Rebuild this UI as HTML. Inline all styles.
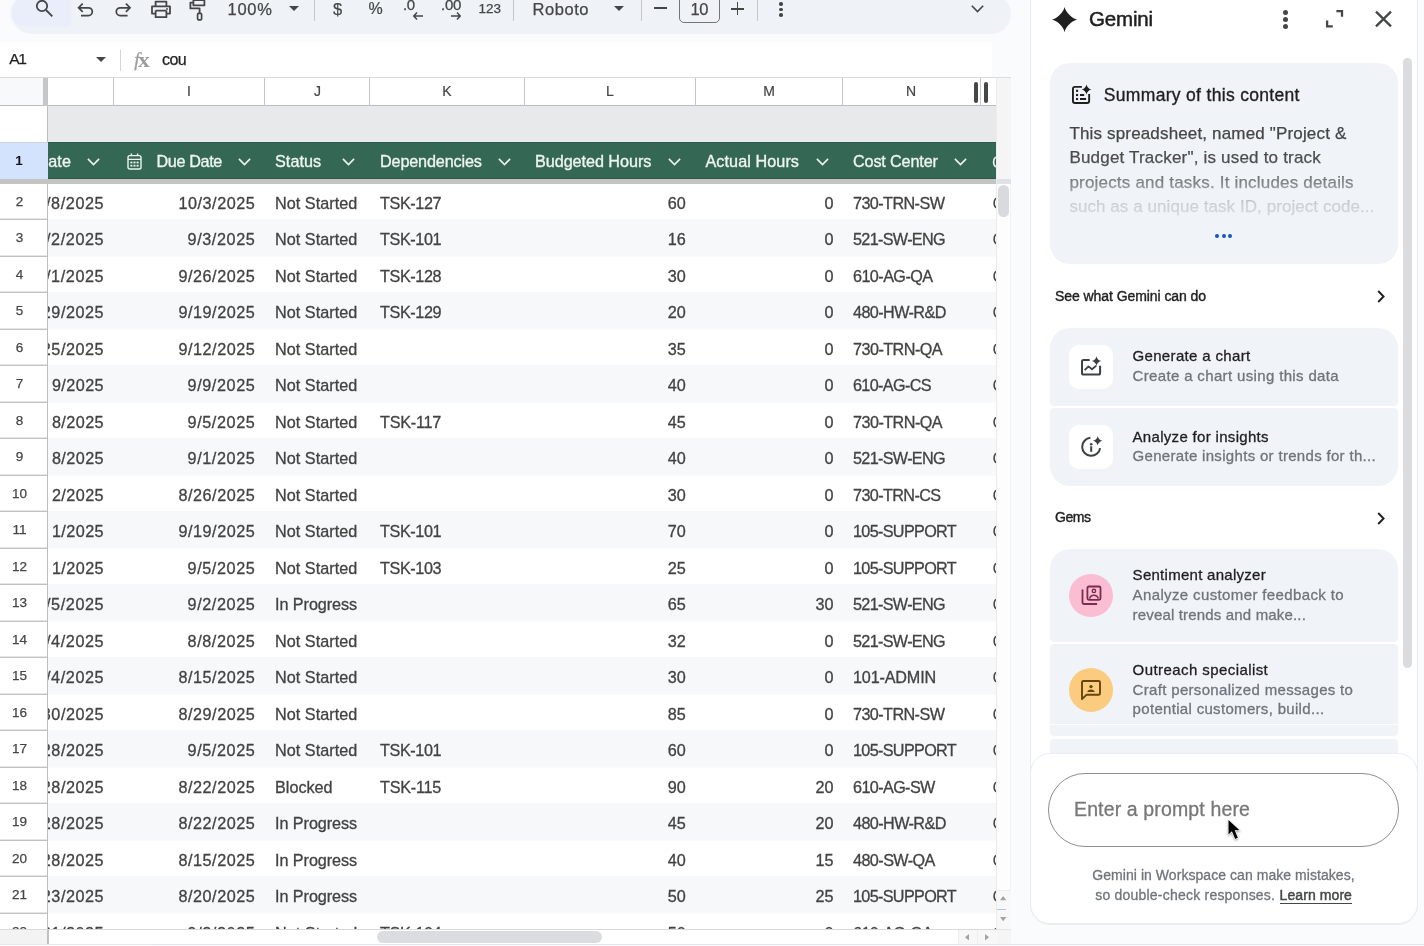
<!DOCTYPE html>
<html><head><meta charset="utf-8"><title>Sheets</title>
<style>
html,body{margin:0;padding:0}
body{width:1424px;height:946px;overflow:hidden;position:relative;background:#f9fbfd;font-family:"Liberation Sans",sans-serif;}
div,svg{box-sizing:border-box}
svg{overflow:visible}
</style></head><body>
<div style="position:absolute;left:0;top:0;width:1424px;height:946px;overflow:hidden;will-change:transform;background:#f9fbfd">
<div style="position:absolute;left:12px;top:-6px;width:998.5px;height:40px;background:#eff3f8;border-radius:24px;"></div>
<div style="position:absolute;left:12px;top:-6px;width:57.5px;height:32px;background:#e9eefa;border-radius:24px 0 0 16px;box-shadow:0 0 3px 1px #e9eefa;"></div>
<svg style="position:absolute;left:34px;top:-1.8px;" width="20" height="20" viewBox="0 0 20 20"><circle cx="8" cy="8" r="5.2" fill="none" stroke="#444746" stroke-width="1.8"/><path d="M12 12 L18.3 18.3" stroke="#444746" stroke-width="1.9" stroke-linecap="butt"/></svg>
<svg style="position:absolute;left:76px;top:1px;" width="18" height="18" viewBox="0 0 18 18"><path d="M6.7 2.7 L2.6 6.75 L6.7 10.8 M3 6.75 H12.4 A3.9 3.9 0 0 1 12.4 14.55 H5" fill="none" stroke="#444746" stroke-width="1.75"/></svg>
<svg style="position:absolute;left:114px;top:1px;" width="18" height="18" viewBox="0 0 18 18"><path d="M11.9 2.7 L16 6.75 L11.9 10.8 M15.6 6.75 H6.2 A3.9 3.9 0 0 0 6.2 14.55 H13.6" fill="none" stroke="#444746" stroke-width="1.75"/></svg>
<svg style="position:absolute;left:151px;top:0px;" width="20" height="19" viewBox="0 0 20 19"><path d="M4.6 6.4 V1.6 H15.4 V6.4 M4.6 10.6 V17.2 H15.4 V10.6 M4.6 13.6 H1 V6.4 H19 V13.6 H15.4 M4.6 10.6 H15.4" fill="none" stroke="#444746" stroke-width="1.8" stroke-linejoin="round"/><circle cx="16" cy="9" r="0.9" fill="#444746"/></svg>
<svg style="position:absolute;left:189px;top:-2px;" width="18" height="24" viewBox="0 0 18 24"><path d="M4.4 2 H15.4 V7.4 H4.4 Z M4.4 4.6 H1.4 V10.4 H10.6 V15" fill="none" stroke="#444746" stroke-width="1.8" stroke-linejoin="round"/><rect x="8.6" y="15.4" width="4" height="6.4" rx="1" fill="none" stroke="#444746" stroke-width="1.7"/></svg>
<div style="position:absolute;top:-3.00px;height:25px;line-height:25px;font-size:16.5px;color:#444746;white-space:nowrap;letter-spacing:0.700px;-webkit-text-stroke:0.25px #444746;left:227.50px;">100%</div>
<svg style="position:absolute;left:289px;top:6px;" width="10" height="5" viewBox="0 0 10 5"><path d="M0 0 H10 L5 5 Z" fill="#444746"/></svg>
<div style="position:absolute;left:314px;top:0px;width:1px;height:21px;background:#c7c7c7;"></div>
<div style="position:absolute;top:-3.50px;height:25px;line-height:25px;font-size:16.5px;color:#444746;white-space:nowrap;letter-spacing:-0.677px;-webkit-text-stroke:0.2px #444746;left:333.00px;">$</div>
<div style="position:absolute;top:-3.20px;height:24px;line-height:24px;font-size:16px;color:#444746;white-space:nowrap;letter-spacing:-1.426px;-webkit-text-stroke:0.2px #444746;left:368.50px;">%</div>
<div style="position:absolute;top:-6.40px;height:22px;line-height:22px;font-size:15px;color:#444746;white-space:nowrap;letter-spacing:-0.355px;-webkit-text-stroke:0.3px #444746;left:403.00px;">.0</div>
<svg style="position:absolute;left:413px;top:12px;" width="10" height="8" viewBox="0 0 10 8"><path d="M4 0.6 L0.8 4 L4 7.4 M1 4 H10" fill="none" stroke="#444746" stroke-width="1.5"/></svg>
<div style="position:absolute;top:-6.40px;height:22px;line-height:22px;font-size:15px;color:#444746;white-space:nowrap;letter-spacing:-0.284px;-webkit-text-stroke:0.3px #444746;left:441.00px;">.00</div>
<svg style="position:absolute;left:450.5px;top:12px;" width="10" height="8" viewBox="0 0 10 8"><path d="M6 0.6 L9.2 4 L6 7.4 M9 4 H0" fill="none" stroke="#444746" stroke-width="1.5"/></svg>
<div style="position:absolute;top:-1.50px;height:20px;line-height:20px;font-size:13.5px;color:#444746;white-space:nowrap;letter-spacing:-0.008px;-webkit-text-stroke:0.25px #444746;left:478.50px;">123</div>
<div style="position:absolute;left:513px;top:0px;width:1px;height:21px;background:#c7c7c7;"></div>
<div style="position:absolute;top:-3.50px;height:25px;line-height:25px;font-size:16.5px;color:#444746;white-space:nowrap;letter-spacing:0.549px;-webkit-text-stroke:0.25px #444746;left:532.50px;">Roboto</div>
<svg style="position:absolute;left:613.5px;top:5.5px;" width="10" height="5" viewBox="0 0 10 5"><path d="M0 0 H10 L5 5 Z" fill="#444746"/></svg>
<div style="position:absolute;left:641px;top:0px;width:1px;height:21px;background:#c7c7c7;"></div>
<div style="position:absolute;left:653.5px;top:7.2px;width:13px;height:1.7px;background:#444746;"></div>
<div style="position:absolute;left:679px;top:-8px;width:40.5px;height:31px;background:transparent;border:1px solid #747775;border-radius:5px;"></div>
<div style="position:absolute;top:-3.50px;height:25px;line-height:25px;font-size:16.5px;color:#444746;white-space:nowrap;letter-spacing:-0.427px;-webkit-text-stroke:0.25px #444746;left:690.50px;">10</div>
<div style="position:absolute;left:731px;top:7.9px;width:12.6px;height:1.7px;background:#444746;"></div>
<div style="position:absolute;left:736.5px;top:2.4px;width:1.7px;height:12.6px;background:#444746;"></div>
<div style="position:absolute;left:757px;top:0px;width:1px;height:21px;background:#c7c7c7;"></div>
<div style="position:absolute;left:779.4px;top:2.0999999999999996px;width:3.5px;height:3.5px;background:#444746;border-radius:50%;"></div>
<div style="position:absolute;left:779.4px;top:7.499999999999999px;width:3.5px;height:3.5px;background:#444746;border-radius:50%;"></div>
<div style="position:absolute;left:779.4px;top:13.100000000000001px;width:3.5px;height:3.5px;background:#444746;border-radius:50%;"></div>
<svg style="position:absolute;left:970.5px;top:5px;" width="13" height="8" viewBox="0 0 13 8"><path d="M0.8 0.8 L6.5 6.6 L12.2 0.8" fill="none" stroke="#444746" stroke-width="1.6"/></svg>
<div style="position:absolute;left:0px;top:42px;width:991.5px;height:35.5px;background:#ffffff;"></div>
<div style="position:absolute;top:47.40px;height:23px;line-height:23px;font-size:15.5px;color:#1f1f1f;white-space:nowrap;letter-spacing:-1.380px;-webkit-text-stroke:0.25px #1f1f1f;left:9.30px;">A1</div>
<svg style="position:absolute;left:96px;top:57px;" width="10" height="5" viewBox="0 0 10 5"><path d="M0 0 H10 L5 5 Z" fill="#444746"/></svg>
<div style="position:absolute;left:120px;top:50px;width:1px;height:21px;background:#d5d5d5;"></div>
<div style="position:absolute;left:134.3px;top:47px;width:24px;height:24px;line-height:24px;font-family:'Liberation Serif',serif;color:#9e9e9e;white-space:nowrap"><span style="font-style:italic;font-size:19px;-webkit-text-stroke:0.35px #9e9e9e">f</span><span style="display:inline-block;font-weight:bold;font-size:21px;margin-left:-1.6px;position:relative;top:1.2px;transform:scaleX(1.12);transform-origin:left center">x</span></div>
<div style="position:absolute;top:48.40px;height:24px;line-height:24px;font-size:16px;color:#1f1f1f;white-space:nowrap;letter-spacing:-0.533px;-webkit-text-stroke:0.25px #1f1f1f;left:162.00px;">cou</div>
<div style="position:absolute;left:0px;top:77px;width:996px;height:29px;background:#ffffff;border-top:1px solid #d9d9d9;border-bottom:1.5px solid #bdbdbd;"></div>
<div style="position:absolute;left:0px;top:78px;width:43.5px;height:27px;background:#f8f9fa;"></div>
<div style="position:absolute;left:43px;top:77.5px;width:4.5px;height:28px;background:#c4c7c5;"></div>
<div style="position:absolute;left:113px;top:78px;width:1px;height:27.5px;background:#c6c6c6;"></div>
<div style="position:absolute;left:264px;top:78px;width:1px;height:27.5px;background:#c6c6c6;"></div>
<div style="position:absolute;left:369px;top:78px;width:1px;height:27.5px;background:#c6c6c6;"></div>
<div style="position:absolute;left:524px;top:78px;width:1px;height:27.5px;background:#c6c6c6;"></div>
<div style="position:absolute;left:694.5px;top:78px;width:1px;height:27.5px;background:#c6c6c6;"></div>
<div style="position:absolute;left:842px;top:78px;width:1px;height:27.5px;background:#c6c6c6;"></div>
<div style="position:absolute;left:980px;top:78px;width:1px;height:27.5px;background:#c6c6c6;"></div>
<div style="position:absolute;top:81.10px;height:21px;line-height:21px;font-size:14px;color:#444746;white-space:nowrap;-webkit-text-stroke:0.2px #444746;left:179.00px;width:20px;text-align:center;">I</div>
<div style="position:absolute;top:81.10px;height:21px;line-height:21px;font-size:14px;color:#444746;white-space:nowrap;-webkit-text-stroke:0.2px #444746;left:307.50px;width:20px;text-align:center;">J</div>
<div style="position:absolute;top:81.10px;height:21px;line-height:21px;font-size:14px;color:#444746;white-space:nowrap;-webkit-text-stroke:0.2px #444746;left:437.00px;width:20px;text-align:center;">K</div>
<div style="position:absolute;top:81.10px;height:21px;line-height:21px;font-size:14px;color:#444746;white-space:nowrap;-webkit-text-stroke:0.2px #444746;left:600.00px;width:20px;text-align:center;">L</div>
<div style="position:absolute;top:81.10px;height:21px;line-height:21px;font-size:14px;color:#444746;white-space:nowrap;-webkit-text-stroke:0.2px #444746;left:759.00px;width:20px;text-align:center;">M</div>
<div style="position:absolute;top:81.10px;height:21px;line-height:21px;font-size:14px;color:#444746;white-space:nowrap;-webkit-text-stroke:0.2px #444746;left:901.00px;width:20px;text-align:center;">N</div>
<div style="position:absolute;left:974px;top:82px;width:4.2px;height:20.5px;background:#444746;border-radius:2px;"></div>
<div style="position:absolute;left:983.8px;top:82px;width:4px;height:20.5px;background:#444746;border-radius:2px;"></div>
<div style="position:absolute;left:48px;top:106px;width:948px;height:36.5px;background:#e8e9eb;"></div>
<div style="position:absolute;left:0px;top:106px;width:47px;height:36.5px;background:#ffffff;"></div>
<div style="position:absolute;left:47px;top:106px;width:1px;height:838px;background:#bdbdbd;"></div>
<div style="position:absolute;left:0px;top:142px;width:47.5px;height:37px;background:#d3e3fd;border-top:1px solid #d0d4da;"></div>
<div style="position:absolute;top:150.50px;height:20px;line-height:20px;font-size:13.5px;color:#111;white-space:nowrap;font-weight:bold;left:9.00px;width:20px;text-align:center;">1</div>
<div style="position:absolute;left:47.5px;top:142px;width:948.5px;height:37px;background:#356854;border-top:1px solid #2d5a48;border-bottom:1px solid #2d5a48;"></div>
<div style="position:absolute;top:148.80px;height:24px;line-height:24px;font-size:16.2px;color:#eef4f0;white-space:nowrap;letter-spacing:0.055px;-webkit-text-stroke:0.35px #eef4f0;left:48.30px;">ate</div>
<svg style="position:absolute;left:87.0px;top:158px;" width="13" height="8" viewBox="0 0 13 8"><path d="M0.9 0.9 L6.5 6.5 L12.1 0.9" fill="none" stroke="#eef4f0" stroke-width="1.6"/></svg>
<svg style="position:absolute;left:126.5px;top:152.5px;" width="15" height="17" viewBox="0 0 15 17"><rect x="1" y="2.6" width="13" height="13.4" rx="1.8" fill="none" stroke="#eef4f0" stroke-width="1.4"/><path d="M4.4 0.4 V3 M10.6 0.4 V3 M1 6.4 H14" stroke="#eef4f0" stroke-width="1.4" fill="none"/><g fill="#eef4f0"><rect x="3.4" y="8.6" width="2" height="1.8"/><rect x="6.5" y="8.6" width="2" height="1.8"/><rect x="9.6" y="8.6" width="2" height="1.8"/><rect x="3.4" y="11.8" width="2" height="1.8"/><rect x="6.5" y="11.8" width="2" height="1.8"/><rect x="9.6" y="11.8" width="2" height="1.8"/></g></svg>
<div style="position:absolute;top:148.80px;height:24px;line-height:24px;font-size:16.2px;color:#eef4f0;white-space:nowrap;letter-spacing:-0.373px;-webkit-text-stroke:0.35px #eef4f0;left:156.50px;">Due Date</div>
<svg style="position:absolute;left:238.0px;top:158px;" width="13" height="8" viewBox="0 0 13 8"><path d="M0.9 0.9 L6.5 6.5 L12.1 0.9" fill="none" stroke="#eef4f0" stroke-width="1.6"/></svg>
<div style="position:absolute;top:148.80px;height:24px;line-height:24px;font-size:16.2px;color:#eef4f0;white-space:nowrap;letter-spacing:0.061px;-webkit-text-stroke:0.35px #eef4f0;left:275.00px;">Status</div>
<svg style="position:absolute;left:342.0px;top:158px;" width="13" height="8" viewBox="0 0 13 8"><path d="M0.9 0.9 L6.5 6.5 L12.1 0.9" fill="none" stroke="#eef4f0" stroke-width="1.6"/></svg>
<div style="position:absolute;top:148.80px;height:24px;line-height:24px;font-size:16.2px;color:#eef4f0;white-space:nowrap;letter-spacing:-0.147px;-webkit-text-stroke:0.35px #eef4f0;left:380.00px;">Dependencies</div>
<svg style="position:absolute;left:498.0px;top:158px;" width="13" height="8" viewBox="0 0 13 8"><path d="M0.9 0.9 L6.5 6.5 L12.1 0.9" fill="none" stroke="#eef4f0" stroke-width="1.6"/></svg>
<div style="position:absolute;top:148.80px;height:24px;line-height:24px;font-size:16.2px;color:#eef4f0;white-space:nowrap;letter-spacing:-0.049px;-webkit-text-stroke:0.35px #eef4f0;left:535.00px;">Budgeted Hours</div>
<svg style="position:absolute;left:668.0px;top:158px;" width="13" height="8" viewBox="0 0 13 8"><path d="M0.9 0.9 L6.5 6.5 L12.1 0.9" fill="none" stroke="#eef4f0" stroke-width="1.6"/></svg>
<div style="position:absolute;top:148.80px;height:24px;line-height:24px;font-size:16.2px;color:#eef4f0;white-space:nowrap;letter-spacing:0.070px;-webkit-text-stroke:0.35px #eef4f0;left:705.50px;">Actual Hours</div>
<svg style="position:absolute;left:816.0px;top:158px;" width="13" height="8" viewBox="0 0 13 8"><path d="M0.9 0.9 L6.5 6.5 L12.1 0.9" fill="none" stroke="#eef4f0" stroke-width="1.6"/></svg>
<div style="position:absolute;top:148.80px;height:24px;line-height:24px;font-size:16.2px;color:#eef4f0;white-space:nowrap;letter-spacing:-0.143px;-webkit-text-stroke:0.35px #eef4f0;left:853.00px;">Cost Center</div>
<svg style="position:absolute;left:954.0px;top:158px;" width="13" height="8" viewBox="0 0 13 8"><path d="M0.9 0.9 L6.5 6.5 L12.1 0.9" fill="none" stroke="#eef4f0" stroke-width="1.6"/></svg>
<div style="position:absolute;left:990px;top:142px;width:6px;height:37px;overflow:hidden"><div style="position:absolute;left:2px;top:7.5px;height:24px;line-height:24px;font-size:16.2px;color:#eef4f0">C</div></div>
<div style="position:absolute;left:0px;top:179px;width:996px;height:4.7px;background:#c4c4c4;"></div>
<div style="position:absolute;left:0;top:183.5px;width:996px;height:745.5px;overflow:hidden">
<div style="position:absolute;left:48px;top:0.00px;width:948px;height:36.50px;background:#ffffff"></div>
<div style="position:absolute;left:0;top:0.00px;width:47px;height:36.50px;background:#fff;border-bottom:1px solid #c2c2c2;box-shadow:inset 0 -1px 0 #e6e6e6"></div>
<div style="position:absolute;left:0.6px;top:8.45px;width:38px;height:20px;line-height:20px;text-align:center;font-size:13.5px;color:#444746;-webkit-text-stroke:0.25px #444746">2</div>
<div style="position:absolute;left:48px;top:0.00px;width:66px;height:36.50px;overflow:hidden">
<div style="position:absolute;right:9.79px;top:7.25px;height:24px;line-height:24px;font-size:16.2px;color:#434343;white-space:nowrap;letter-spacing:0.609px;-webkit-text-stroke:0.3px #434343">9/8/2025</div></div>
<div style="position:absolute;top:7.25px;height:24px;line-height:24px;font-size:16.2px;color:#434343;white-space:nowrap;letter-spacing:0.551px;-webkit-text-stroke:0.3px #434343;right:740.65px;">10/3/2025</div>
<div style="position:absolute;top:7.25px;height:24px;line-height:24px;font-size:16.2px;color:#434343;white-space:nowrap;letter-spacing:0.032px;-webkit-text-stroke:0.3px #434343;left:275px;">Not Started</div>
<div style="position:absolute;top:7.25px;height:24px;line-height:24px;font-size:16.2px;color:#434343;white-space:nowrap;letter-spacing:-0.391px;-webkit-text-stroke:0.3px #434343;left:380px;">TSK-127</div>
<div style="position:absolute;top:7.25px;height:24px;line-height:24px;font-size:16.2px;color:#434343;white-space:nowrap;letter-spacing:0.087px;-webkit-text-stroke:0.3px #434343;right:310.11px;">60</div>
<div style="position:absolute;top:7.25px;height:24px;line-height:24px;font-size:16.2px;color:#434343;white-space:nowrap;letter-spacing:0.087px;-webkit-text-stroke:0.3px #434343;right:162.41px;">0</div>
<div style="position:absolute;top:7.25px;height:24px;line-height:24px;font-size:16.2px;color:#434343;white-space:nowrap;letter-spacing:-0.581px;-webkit-text-stroke:0.3px #434343;left:853px;">730-TRN-SW</div>
<div style="position:absolute;left:990px;top:0.00px;width:6px;height:36.50px;overflow:hidden"><div style="position:absolute;left:2.5px;top:7.25px;height:24px;line-height:24px;font-size:16.2px;color:#434343">C</div></div>
<div style="position:absolute;left:48px;top:35.20px;width:948px;height:37.80px;background:#f6f8f9"></div>
<div style="position:absolute;left:0;top:36.50px;width:47px;height:36.50px;background:#fff;border-bottom:1px solid #c2c2c2;box-shadow:inset 0 -1px 0 #e6e6e6"></div>
<div style="position:absolute;left:0.6px;top:44.95px;width:38px;height:20px;line-height:20px;text-align:center;font-size:13.5px;color:#444746;-webkit-text-stroke:0.25px #444746">3</div>
<div style="position:absolute;left:48px;top:36.50px;width:66px;height:36.50px;overflow:hidden">
<div style="position:absolute;right:9.79px;top:7.25px;height:24px;line-height:24px;font-size:16.2px;color:#434343;white-space:nowrap;letter-spacing:0.609px;-webkit-text-stroke:0.3px #434343">9/2/2025</div></div>
<div style="position:absolute;top:43.75px;height:24px;line-height:24px;font-size:16.2px;color:#434343;white-space:nowrap;letter-spacing:0.609px;-webkit-text-stroke:0.3px #434343;right:740.59px;">9/3/2025</div>
<div style="position:absolute;top:43.75px;height:24px;line-height:24px;font-size:16.2px;color:#434343;white-space:nowrap;letter-spacing:0.032px;-webkit-text-stroke:0.3px #434343;left:275px;">Not Started</div>
<div style="position:absolute;top:43.75px;height:24px;line-height:24px;font-size:16.2px;color:#434343;white-space:nowrap;letter-spacing:-0.391px;-webkit-text-stroke:0.3px #434343;left:380px;">TSK-101</div>
<div style="position:absolute;top:43.75px;height:24px;line-height:24px;font-size:16.2px;color:#434343;white-space:nowrap;letter-spacing:0.087px;-webkit-text-stroke:0.3px #434343;right:310.11px;">16</div>
<div style="position:absolute;top:43.75px;height:24px;line-height:24px;font-size:16.2px;color:#434343;white-space:nowrap;letter-spacing:0.087px;-webkit-text-stroke:0.3px #434343;right:162.41px;">0</div>
<div style="position:absolute;top:43.75px;height:24px;line-height:24px;font-size:16.2px;color:#434343;white-space:nowrap;letter-spacing:-0.673px;-webkit-text-stroke:0.3px #434343;left:853px;">521-SW-ENG</div>
<div style="position:absolute;left:990px;top:36.50px;width:6px;height:36.50px;overflow:hidden"><div style="position:absolute;left:2.5px;top:7.25px;height:24px;line-height:24px;font-size:16.2px;color:#434343">C</div></div>
<div style="position:absolute;left:48px;top:73.00px;width:948px;height:36.50px;background:#ffffff"></div>
<div style="position:absolute;left:0;top:73.00px;width:47px;height:36.50px;background:#fff;border-bottom:1px solid #c2c2c2;box-shadow:inset 0 -1px 0 #e6e6e6"></div>
<div style="position:absolute;left:0.6px;top:81.45px;width:38px;height:20px;line-height:20px;text-align:center;font-size:13.5px;color:#444746;-webkit-text-stroke:0.25px #444746">4</div>
<div style="position:absolute;left:48px;top:73.00px;width:66px;height:36.50px;overflow:hidden">
<div style="position:absolute;right:9.79px;top:7.25px;height:24px;line-height:24px;font-size:16.2px;color:#434343;white-space:nowrap;letter-spacing:0.609px;-webkit-text-stroke:0.3px #434343">9/1/2025</div></div>
<div style="position:absolute;top:80.25px;height:24px;line-height:24px;font-size:16.2px;color:#434343;white-space:nowrap;letter-spacing:0.551px;-webkit-text-stroke:0.3px #434343;right:740.65px;">9/26/2025</div>
<div style="position:absolute;top:80.25px;height:24px;line-height:24px;font-size:16.2px;color:#434343;white-space:nowrap;letter-spacing:0.032px;-webkit-text-stroke:0.3px #434343;left:275px;">Not Started</div>
<div style="position:absolute;top:80.25px;height:24px;line-height:24px;font-size:16.2px;color:#434343;white-space:nowrap;letter-spacing:-0.391px;-webkit-text-stroke:0.3px #434343;left:380px;">TSK-128</div>
<div style="position:absolute;top:80.25px;height:24px;line-height:24px;font-size:16.2px;color:#434343;white-space:nowrap;letter-spacing:0.087px;-webkit-text-stroke:0.3px #434343;right:310.11px;">30</div>
<div style="position:absolute;top:80.25px;height:24px;line-height:24px;font-size:16.2px;color:#434343;white-space:nowrap;letter-spacing:0.087px;-webkit-text-stroke:0.3px #434343;right:162.41px;">0</div>
<div style="position:absolute;top:80.25px;height:24px;line-height:24px;font-size:16.2px;color:#434343;white-space:nowrap;letter-spacing:-0.566px;-webkit-text-stroke:0.3px #434343;left:853px;">610-AG-QA</div>
<div style="position:absolute;left:990px;top:73.00px;width:6px;height:36.50px;overflow:hidden"><div style="position:absolute;left:2.5px;top:7.25px;height:24px;line-height:24px;font-size:16.2px;color:#434343">C</div></div>
<div style="position:absolute;left:48px;top:108.20px;width:948px;height:37.80px;background:#f6f8f9"></div>
<div style="position:absolute;left:0;top:109.50px;width:47px;height:36.50px;background:#fff;border-bottom:1px solid #c2c2c2;box-shadow:inset 0 -1px 0 #e6e6e6"></div>
<div style="position:absolute;left:0.6px;top:117.95px;width:38px;height:20px;line-height:20px;text-align:center;font-size:13.5px;color:#444746;-webkit-text-stroke:0.25px #444746">5</div>
<div style="position:absolute;left:48px;top:109.50px;width:66px;height:36.50px;overflow:hidden">
<div style="position:absolute;right:9.85px;top:7.25px;height:24px;line-height:24px;font-size:16.2px;color:#434343;white-space:nowrap;letter-spacing:0.551px;-webkit-text-stroke:0.3px #434343">8/29/2025</div></div>
<div style="position:absolute;top:116.75px;height:24px;line-height:24px;font-size:16.2px;color:#434343;white-space:nowrap;letter-spacing:0.551px;-webkit-text-stroke:0.3px #434343;right:740.65px;">9/19/2025</div>
<div style="position:absolute;top:116.75px;height:24px;line-height:24px;font-size:16.2px;color:#434343;white-space:nowrap;letter-spacing:0.032px;-webkit-text-stroke:0.3px #434343;left:275px;">Not Started</div>
<div style="position:absolute;top:116.75px;height:24px;line-height:24px;font-size:16.2px;color:#434343;white-space:nowrap;letter-spacing:-0.391px;-webkit-text-stroke:0.3px #434343;left:380px;">TSK-129</div>
<div style="position:absolute;top:116.75px;height:24px;line-height:24px;font-size:16.2px;color:#434343;white-space:nowrap;letter-spacing:0.087px;-webkit-text-stroke:0.3px #434343;right:310.11px;">20</div>
<div style="position:absolute;top:116.75px;height:24px;line-height:24px;font-size:16.2px;color:#434343;white-space:nowrap;letter-spacing:0.087px;-webkit-text-stroke:0.3px #434343;right:162.41px;">0</div>
<div style="position:absolute;top:116.75px;height:24px;line-height:24px;font-size:16.2px;color:#434343;white-space:nowrap;letter-spacing:-0.591px;-webkit-text-stroke:0.3px #434343;left:853px;">480-HW-R&amp;D</div>
<div style="position:absolute;left:990px;top:109.50px;width:6px;height:36.50px;overflow:hidden"><div style="position:absolute;left:2.5px;top:7.25px;height:24px;line-height:24px;font-size:16.2px;color:#434343">C</div></div>
<div style="position:absolute;left:48px;top:146.00px;width:948px;height:36.50px;background:#ffffff"></div>
<div style="position:absolute;left:0;top:146.00px;width:47px;height:36.50px;background:#fff;border-bottom:1px solid #c2c2c2;box-shadow:inset 0 -1px 0 #e6e6e6"></div>
<div style="position:absolute;left:0.6px;top:154.45px;width:38px;height:20px;line-height:20px;text-align:center;font-size:13.5px;color:#444746;-webkit-text-stroke:0.25px #444746">6</div>
<div style="position:absolute;left:48px;top:146.00px;width:66px;height:36.50px;overflow:hidden">
<div style="position:absolute;right:9.85px;top:7.25px;height:24px;line-height:24px;font-size:16.2px;color:#434343;white-space:nowrap;letter-spacing:0.551px;-webkit-text-stroke:0.3px #434343">8/25/2025</div></div>
<div style="position:absolute;top:153.25px;height:24px;line-height:24px;font-size:16.2px;color:#434343;white-space:nowrap;letter-spacing:0.551px;-webkit-text-stroke:0.3px #434343;right:740.65px;">9/12/2025</div>
<div style="position:absolute;top:153.25px;height:24px;line-height:24px;font-size:16.2px;color:#434343;white-space:nowrap;letter-spacing:0.032px;-webkit-text-stroke:0.3px #434343;left:275px;">Not Started</div>
<div style="position:absolute;top:153.25px;height:24px;line-height:24px;font-size:16.2px;color:#434343;white-space:nowrap;letter-spacing:0.087px;-webkit-text-stroke:0.3px #434343;right:310.11px;">35</div>
<div style="position:absolute;top:153.25px;height:24px;line-height:24px;font-size:16.2px;color:#434343;white-space:nowrap;letter-spacing:0.087px;-webkit-text-stroke:0.3px #434343;right:162.41px;">0</div>
<div style="position:absolute;top:153.25px;height:24px;line-height:24px;font-size:16.2px;color:#434343;white-space:nowrap;letter-spacing:-0.540px;-webkit-text-stroke:0.3px #434343;left:853px;">730-TRN-QA</div>
<div style="position:absolute;left:990px;top:146.00px;width:6px;height:36.50px;overflow:hidden"><div style="position:absolute;left:2.5px;top:7.25px;height:24px;line-height:24px;font-size:16.2px;color:#434343">C</div></div>
<div style="position:absolute;left:48px;top:181.20px;width:948px;height:37.80px;background:#f6f8f9"></div>
<div style="position:absolute;left:0;top:182.50px;width:47px;height:36.50px;background:#fff;border-bottom:1px solid #c2c2c2;box-shadow:inset 0 -1px 0 #e6e6e6"></div>
<div style="position:absolute;left:0.6px;top:190.95px;width:38px;height:20px;line-height:20px;text-align:center;font-size:13.5px;color:#444746;-webkit-text-stroke:0.25px #444746">7</div>
<div style="position:absolute;left:48px;top:182.50px;width:66px;height:36.50px;overflow:hidden">
<div style="position:absolute;right:9.97px;top:7.25px;height:24px;line-height:24px;font-size:16.2px;color:#434343;white-space:nowrap;letter-spacing:0.435px;-webkit-text-stroke:0.3px #434343">9/2025</div></div>
<div style="position:absolute;top:189.75px;height:24px;line-height:24px;font-size:16.2px;color:#434343;white-space:nowrap;letter-spacing:0.609px;-webkit-text-stroke:0.3px #434343;right:740.59px;">9/9/2025</div>
<div style="position:absolute;top:189.75px;height:24px;line-height:24px;font-size:16.2px;color:#434343;white-space:nowrap;letter-spacing:0.032px;-webkit-text-stroke:0.3px #434343;left:275px;">Not Started</div>
<div style="position:absolute;top:189.75px;height:24px;line-height:24px;font-size:16.2px;color:#434343;white-space:nowrap;letter-spacing:0.087px;-webkit-text-stroke:0.3px #434343;right:310.11px;">40</div>
<div style="position:absolute;top:189.75px;height:24px;line-height:24px;font-size:16.2px;color:#434343;white-space:nowrap;letter-spacing:0.087px;-webkit-text-stroke:0.3px #434343;right:162.41px;">0</div>
<div style="position:absolute;top:189.75px;height:24px;line-height:24px;font-size:16.2px;color:#434343;white-space:nowrap;letter-spacing:-0.638px;-webkit-text-stroke:0.3px #434343;left:853px;">610-AG-CS</div>
<div style="position:absolute;left:990px;top:182.50px;width:6px;height:36.50px;overflow:hidden"><div style="position:absolute;left:2.5px;top:7.25px;height:24px;line-height:24px;font-size:16.2px;color:#434343">C</div></div>
<div style="position:absolute;left:48px;top:219.00px;width:948px;height:36.50px;background:#ffffff"></div>
<div style="position:absolute;left:0;top:219.00px;width:47px;height:36.50px;background:#fff;border-bottom:1px solid #c2c2c2;box-shadow:inset 0 -1px 0 #e6e6e6"></div>
<div style="position:absolute;left:0.6px;top:227.45px;width:38px;height:20px;line-height:20px;text-align:center;font-size:13.5px;color:#444746;-webkit-text-stroke:0.25px #444746">8</div>
<div style="position:absolute;left:48px;top:219.00px;width:66px;height:36.50px;overflow:hidden">
<div style="position:absolute;right:9.97px;top:7.25px;height:24px;line-height:24px;font-size:16.2px;color:#434343;white-space:nowrap;letter-spacing:0.435px;-webkit-text-stroke:0.3px #434343">8/2025</div></div>
<div style="position:absolute;top:226.25px;height:24px;line-height:24px;font-size:16.2px;color:#434343;white-space:nowrap;letter-spacing:0.609px;-webkit-text-stroke:0.3px #434343;right:740.59px;">9/5/2025</div>
<div style="position:absolute;top:226.25px;height:24px;line-height:24px;font-size:16.2px;color:#434343;white-space:nowrap;letter-spacing:0.032px;-webkit-text-stroke:0.3px #434343;left:275px;">Not Started</div>
<div style="position:absolute;top:226.25px;height:24px;line-height:24px;font-size:16.2px;color:#434343;white-space:nowrap;letter-spacing:-0.220px;-webkit-text-stroke:0.3px #434343;left:380px;">TSK-117</div>
<div style="position:absolute;top:226.25px;height:24px;line-height:24px;font-size:16.2px;color:#434343;white-space:nowrap;letter-spacing:0.087px;-webkit-text-stroke:0.3px #434343;right:310.11px;">45</div>
<div style="position:absolute;top:226.25px;height:24px;line-height:24px;font-size:16.2px;color:#434343;white-space:nowrap;letter-spacing:0.087px;-webkit-text-stroke:0.3px #434343;right:162.41px;">0</div>
<div style="position:absolute;top:226.25px;height:24px;line-height:24px;font-size:16.2px;color:#434343;white-space:nowrap;letter-spacing:-0.540px;-webkit-text-stroke:0.3px #434343;left:853px;">730-TRN-QA</div>
<div style="position:absolute;left:990px;top:219.00px;width:6px;height:36.50px;overflow:hidden"><div style="position:absolute;left:2.5px;top:7.25px;height:24px;line-height:24px;font-size:16.2px;color:#434343">C</div></div>
<div style="position:absolute;left:48px;top:254.20px;width:948px;height:37.80px;background:#f6f8f9"></div>
<div style="position:absolute;left:0;top:255.50px;width:47px;height:36.50px;background:#fff;border-bottom:1px solid #c2c2c2;box-shadow:inset 0 -1px 0 #e6e6e6"></div>
<div style="position:absolute;left:0.6px;top:263.95px;width:38px;height:20px;line-height:20px;text-align:center;font-size:13.5px;color:#444746;-webkit-text-stroke:0.25px #444746">9</div>
<div style="position:absolute;left:48px;top:255.50px;width:66px;height:36.50px;overflow:hidden">
<div style="position:absolute;right:9.97px;top:7.25px;height:24px;line-height:24px;font-size:16.2px;color:#434343;white-space:nowrap;letter-spacing:0.435px;-webkit-text-stroke:0.3px #434343">8/2025</div></div>
<div style="position:absolute;top:262.75px;height:24px;line-height:24px;font-size:16.2px;color:#434343;white-space:nowrap;letter-spacing:0.609px;-webkit-text-stroke:0.3px #434343;right:740.59px;">9/1/2025</div>
<div style="position:absolute;top:262.75px;height:24px;line-height:24px;font-size:16.2px;color:#434343;white-space:nowrap;letter-spacing:0.032px;-webkit-text-stroke:0.3px #434343;left:275px;">Not Started</div>
<div style="position:absolute;top:262.75px;height:24px;line-height:24px;font-size:16.2px;color:#434343;white-space:nowrap;letter-spacing:0.087px;-webkit-text-stroke:0.3px #434343;right:310.11px;">40</div>
<div style="position:absolute;top:262.75px;height:24px;line-height:24px;font-size:16.2px;color:#434343;white-space:nowrap;letter-spacing:0.087px;-webkit-text-stroke:0.3px #434343;right:162.41px;">0</div>
<div style="position:absolute;top:262.75px;height:24px;line-height:24px;font-size:16.2px;color:#434343;white-space:nowrap;letter-spacing:-0.673px;-webkit-text-stroke:0.3px #434343;left:853px;">521-SW-ENG</div>
<div style="position:absolute;left:990px;top:255.50px;width:6px;height:36.50px;overflow:hidden"><div style="position:absolute;left:2.5px;top:7.25px;height:24px;line-height:24px;font-size:16.2px;color:#434343">C</div></div>
<div style="position:absolute;left:48px;top:292.00px;width:948px;height:36.50px;background:#ffffff"></div>
<div style="position:absolute;left:0;top:292.00px;width:47px;height:36.50px;background:#fff;border-bottom:1px solid #c2c2c2;box-shadow:inset 0 -1px 0 #e6e6e6"></div>
<div style="position:absolute;left:0.6px;top:300.45px;width:38px;height:20px;line-height:20px;text-align:center;font-size:13.5px;color:#444746;-webkit-text-stroke:0.25px #444746">10</div>
<div style="position:absolute;left:48px;top:292.00px;width:66px;height:36.50px;overflow:hidden">
<div style="position:absolute;right:9.97px;top:7.25px;height:24px;line-height:24px;font-size:16.2px;color:#434343;white-space:nowrap;letter-spacing:0.435px;-webkit-text-stroke:0.3px #434343">2/2025</div></div>
<div style="position:absolute;top:299.25px;height:24px;line-height:24px;font-size:16.2px;color:#434343;white-space:nowrap;letter-spacing:0.551px;-webkit-text-stroke:0.3px #434343;right:740.65px;">8/26/2025</div>
<div style="position:absolute;top:299.25px;height:24px;line-height:24px;font-size:16.2px;color:#434343;white-space:nowrap;letter-spacing:0.032px;-webkit-text-stroke:0.3px #434343;left:275px;">Not Started</div>
<div style="position:absolute;top:299.25px;height:24px;line-height:24px;font-size:16.2px;color:#434343;white-space:nowrap;letter-spacing:0.087px;-webkit-text-stroke:0.3px #434343;right:310.11px;">30</div>
<div style="position:absolute;top:299.25px;height:24px;line-height:24px;font-size:16.2px;color:#434343;white-space:nowrap;letter-spacing:0.087px;-webkit-text-stroke:0.3px #434343;right:162.41px;">0</div>
<div style="position:absolute;top:299.25px;height:24px;line-height:24px;font-size:16.2px;color:#434343;white-space:nowrap;letter-spacing:-0.605px;-webkit-text-stroke:0.3px #434343;left:853px;">730-TRN-CS</div>
<div style="position:absolute;left:990px;top:292.00px;width:6px;height:36.50px;overflow:hidden"><div style="position:absolute;left:2.5px;top:7.25px;height:24px;line-height:24px;font-size:16.2px;color:#434343">C</div></div>
<div style="position:absolute;left:48px;top:327.20px;width:948px;height:37.80px;background:#f6f8f9"></div>
<div style="position:absolute;left:0;top:328.50px;width:47px;height:36.50px;background:#fff;border-bottom:1px solid #c2c2c2;box-shadow:inset 0 -1px 0 #e6e6e6"></div>
<div style="position:absolute;left:0.6px;top:336.95px;width:38px;height:20px;line-height:20px;text-align:center;font-size:13.5px;color:#444746;-webkit-text-stroke:0.25px #444746">11</div>
<div style="position:absolute;left:48px;top:328.50px;width:66px;height:36.50px;overflow:hidden">
<div style="position:absolute;right:9.97px;top:7.25px;height:24px;line-height:24px;font-size:16.2px;color:#434343;white-space:nowrap;letter-spacing:0.435px;-webkit-text-stroke:0.3px #434343">1/2025</div></div>
<div style="position:absolute;top:335.75px;height:24px;line-height:24px;font-size:16.2px;color:#434343;white-space:nowrap;letter-spacing:0.551px;-webkit-text-stroke:0.3px #434343;right:740.65px;">9/19/2025</div>
<div style="position:absolute;top:335.75px;height:24px;line-height:24px;font-size:16.2px;color:#434343;white-space:nowrap;letter-spacing:0.032px;-webkit-text-stroke:0.3px #434343;left:275px;">Not Started</div>
<div style="position:absolute;top:335.75px;height:24px;line-height:24px;font-size:16.2px;color:#434343;white-space:nowrap;letter-spacing:-0.391px;-webkit-text-stroke:0.3px #434343;left:380px;">TSK-101</div>
<div style="position:absolute;top:335.75px;height:24px;line-height:24px;font-size:16.2px;color:#434343;white-space:nowrap;letter-spacing:0.087px;-webkit-text-stroke:0.3px #434343;right:310.11px;">70</div>
<div style="position:absolute;top:335.75px;height:24px;line-height:24px;font-size:16.2px;color:#434343;white-space:nowrap;letter-spacing:0.087px;-webkit-text-stroke:0.3px #434343;right:162.41px;">0</div>
<div style="position:absolute;top:335.75px;height:24px;line-height:24px;font-size:16.2px;color:#434343;white-space:nowrap;letter-spacing:-0.668px;-webkit-text-stroke:0.3px #434343;left:853px;">105-SUPPORT</div>
<div style="position:absolute;left:990px;top:328.50px;width:6px;height:36.50px;overflow:hidden"><div style="position:absolute;left:2.5px;top:7.25px;height:24px;line-height:24px;font-size:16.2px;color:#434343">C</div></div>
<div style="position:absolute;left:48px;top:365.00px;width:948px;height:36.50px;background:#ffffff"></div>
<div style="position:absolute;left:0;top:365.00px;width:47px;height:36.50px;background:#fff;border-bottom:1px solid #c2c2c2;box-shadow:inset 0 -1px 0 #e6e6e6"></div>
<div style="position:absolute;left:0.6px;top:373.45px;width:38px;height:20px;line-height:20px;text-align:center;font-size:13.5px;color:#444746;-webkit-text-stroke:0.25px #444746">12</div>
<div style="position:absolute;left:48px;top:365.00px;width:66px;height:36.50px;overflow:hidden">
<div style="position:absolute;right:9.97px;top:7.25px;height:24px;line-height:24px;font-size:16.2px;color:#434343;white-space:nowrap;letter-spacing:0.435px;-webkit-text-stroke:0.3px #434343">1/2025</div></div>
<div style="position:absolute;top:372.25px;height:24px;line-height:24px;font-size:16.2px;color:#434343;white-space:nowrap;letter-spacing:0.609px;-webkit-text-stroke:0.3px #434343;right:740.59px;">9/5/2025</div>
<div style="position:absolute;top:372.25px;height:24px;line-height:24px;font-size:16.2px;color:#434343;white-space:nowrap;letter-spacing:0.032px;-webkit-text-stroke:0.3px #434343;left:275px;">Not Started</div>
<div style="position:absolute;top:372.25px;height:24px;line-height:24px;font-size:16.2px;color:#434343;white-space:nowrap;letter-spacing:-0.391px;-webkit-text-stroke:0.3px #434343;left:380px;">TSK-103</div>
<div style="position:absolute;top:372.25px;height:24px;line-height:24px;font-size:16.2px;color:#434343;white-space:nowrap;letter-spacing:0.087px;-webkit-text-stroke:0.3px #434343;right:310.11px;">25</div>
<div style="position:absolute;top:372.25px;height:24px;line-height:24px;font-size:16.2px;color:#434343;white-space:nowrap;letter-spacing:0.087px;-webkit-text-stroke:0.3px #434343;right:162.41px;">0</div>
<div style="position:absolute;top:372.25px;height:24px;line-height:24px;font-size:16.2px;color:#434343;white-space:nowrap;letter-spacing:-0.668px;-webkit-text-stroke:0.3px #434343;left:853px;">105-SUPPORT</div>
<div style="position:absolute;left:990px;top:365.00px;width:6px;height:36.50px;overflow:hidden"><div style="position:absolute;left:2.5px;top:7.25px;height:24px;line-height:24px;font-size:16.2px;color:#434343">C</div></div>
<div style="position:absolute;left:48px;top:400.20px;width:948px;height:37.80px;background:#f6f8f9"></div>
<div style="position:absolute;left:0;top:401.50px;width:47px;height:36.50px;background:#fff;border-bottom:1px solid #c2c2c2;box-shadow:inset 0 -1px 0 #e6e6e6"></div>
<div style="position:absolute;left:0.6px;top:409.95px;width:38px;height:20px;line-height:20px;text-align:center;font-size:13.5px;color:#444746;-webkit-text-stroke:0.25px #444746">13</div>
<div style="position:absolute;left:48px;top:401.50px;width:66px;height:36.50px;overflow:hidden">
<div style="position:absolute;right:9.79px;top:7.25px;height:24px;line-height:24px;font-size:16.2px;color:#434343;white-space:nowrap;letter-spacing:0.609px;-webkit-text-stroke:0.3px #434343">8/5/2025</div></div>
<div style="position:absolute;top:408.75px;height:24px;line-height:24px;font-size:16.2px;color:#434343;white-space:nowrap;letter-spacing:0.609px;-webkit-text-stroke:0.3px #434343;right:740.59px;">9/2/2025</div>
<div style="position:absolute;top:408.75px;height:24px;line-height:24px;font-size:16.2px;color:#434343;white-space:nowrap;letter-spacing:-0.062px;-webkit-text-stroke:0.3px #434343;left:275px;">In Progress</div>
<div style="position:absolute;top:408.75px;height:24px;line-height:24px;font-size:16.2px;color:#434343;white-space:nowrap;letter-spacing:0.087px;-webkit-text-stroke:0.3px #434343;right:310.11px;">65</div>
<div style="position:absolute;top:408.75px;height:24px;line-height:24px;font-size:16.2px;color:#434343;white-space:nowrap;letter-spacing:0.087px;-webkit-text-stroke:0.3px #434343;right:162.41px;">30</div>
<div style="position:absolute;top:408.75px;height:24px;line-height:24px;font-size:16.2px;color:#434343;white-space:nowrap;letter-spacing:-0.673px;-webkit-text-stroke:0.3px #434343;left:853px;">521-SW-ENG</div>
<div style="position:absolute;left:990px;top:401.50px;width:6px;height:36.50px;overflow:hidden"><div style="position:absolute;left:2.5px;top:7.25px;height:24px;line-height:24px;font-size:16.2px;color:#434343">C</div></div>
<div style="position:absolute;left:48px;top:438.00px;width:948px;height:36.50px;background:#ffffff"></div>
<div style="position:absolute;left:0;top:438.00px;width:47px;height:36.50px;background:#fff;border-bottom:1px solid #c2c2c2;box-shadow:inset 0 -1px 0 #e6e6e6"></div>
<div style="position:absolute;left:0.6px;top:446.45px;width:38px;height:20px;line-height:20px;text-align:center;font-size:13.5px;color:#444746;-webkit-text-stroke:0.25px #444746">14</div>
<div style="position:absolute;left:48px;top:438.00px;width:66px;height:36.50px;overflow:hidden">
<div style="position:absolute;right:9.79px;top:7.25px;height:24px;line-height:24px;font-size:16.2px;color:#434343;white-space:nowrap;letter-spacing:0.609px;-webkit-text-stroke:0.3px #434343">8/4/2025</div></div>
<div style="position:absolute;top:445.25px;height:24px;line-height:24px;font-size:16.2px;color:#434343;white-space:nowrap;letter-spacing:0.609px;-webkit-text-stroke:0.3px #434343;right:740.59px;">8/8/2025</div>
<div style="position:absolute;top:445.25px;height:24px;line-height:24px;font-size:16.2px;color:#434343;white-space:nowrap;letter-spacing:0.032px;-webkit-text-stroke:0.3px #434343;left:275px;">Not Started</div>
<div style="position:absolute;top:445.25px;height:24px;line-height:24px;font-size:16.2px;color:#434343;white-space:nowrap;letter-spacing:0.087px;-webkit-text-stroke:0.3px #434343;right:310.11px;">32</div>
<div style="position:absolute;top:445.25px;height:24px;line-height:24px;font-size:16.2px;color:#434343;white-space:nowrap;letter-spacing:0.087px;-webkit-text-stroke:0.3px #434343;right:162.41px;">0</div>
<div style="position:absolute;top:445.25px;height:24px;line-height:24px;font-size:16.2px;color:#434343;white-space:nowrap;letter-spacing:-0.673px;-webkit-text-stroke:0.3px #434343;left:853px;">521-SW-ENG</div>
<div style="position:absolute;left:990px;top:438.00px;width:6px;height:36.50px;overflow:hidden"><div style="position:absolute;left:2.5px;top:7.25px;height:24px;line-height:24px;font-size:16.2px;color:#434343">C</div></div>
<div style="position:absolute;left:48px;top:473.20px;width:948px;height:37.80px;background:#f6f8f9"></div>
<div style="position:absolute;left:0;top:474.50px;width:47px;height:36.50px;background:#fff;border-bottom:1px solid #c2c2c2;box-shadow:inset 0 -1px 0 #e6e6e6"></div>
<div style="position:absolute;left:0.6px;top:482.95px;width:38px;height:20px;line-height:20px;text-align:center;font-size:13.5px;color:#444746;-webkit-text-stroke:0.25px #444746">15</div>
<div style="position:absolute;left:48px;top:474.50px;width:66px;height:36.50px;overflow:hidden">
<div style="position:absolute;right:9.79px;top:7.25px;height:24px;line-height:24px;font-size:16.2px;color:#434343;white-space:nowrap;letter-spacing:0.609px;-webkit-text-stroke:0.3px #434343">8/4/2025</div></div>
<div style="position:absolute;top:481.75px;height:24px;line-height:24px;font-size:16.2px;color:#434343;white-space:nowrap;letter-spacing:0.551px;-webkit-text-stroke:0.3px #434343;right:740.65px;">8/15/2025</div>
<div style="position:absolute;top:481.75px;height:24px;line-height:24px;font-size:16.2px;color:#434343;white-space:nowrap;letter-spacing:0.032px;-webkit-text-stroke:0.3px #434343;left:275px;">Not Started</div>
<div style="position:absolute;top:481.75px;height:24px;line-height:24px;font-size:16.2px;color:#434343;white-space:nowrap;letter-spacing:0.087px;-webkit-text-stroke:0.3px #434343;right:310.11px;">30</div>
<div style="position:absolute;top:481.75px;height:24px;line-height:24px;font-size:16.2px;color:#434343;white-space:nowrap;letter-spacing:0.087px;-webkit-text-stroke:0.3px #434343;right:162.41px;">0</div>
<div style="position:absolute;top:481.75px;height:24px;line-height:24px;font-size:16.2px;color:#434343;white-space:nowrap;letter-spacing:-0.175px;-webkit-text-stroke:0.3px #434343;left:853px;">101-ADMIN</div>
<div style="position:absolute;left:990px;top:474.50px;width:6px;height:36.50px;overflow:hidden"><div style="position:absolute;left:2.5px;top:7.25px;height:24px;line-height:24px;font-size:16.2px;color:#434343">C</div></div>
<div style="position:absolute;left:48px;top:511.00px;width:948px;height:36.50px;background:#ffffff"></div>
<div style="position:absolute;left:0;top:511.00px;width:47px;height:36.50px;background:#fff;border-bottom:1px solid #c2c2c2;box-shadow:inset 0 -1px 0 #e6e6e6"></div>
<div style="position:absolute;left:0.6px;top:519.45px;width:38px;height:20px;line-height:20px;text-align:center;font-size:13.5px;color:#444746;-webkit-text-stroke:0.25px #444746">16</div>
<div style="position:absolute;left:48px;top:511.00px;width:66px;height:36.50px;overflow:hidden">
<div style="position:absolute;right:9.85px;top:7.25px;height:24px;line-height:24px;font-size:16.2px;color:#434343;white-space:nowrap;letter-spacing:0.551px;-webkit-text-stroke:0.3px #434343">7/30/2025</div></div>
<div style="position:absolute;top:518.25px;height:24px;line-height:24px;font-size:16.2px;color:#434343;white-space:nowrap;letter-spacing:0.551px;-webkit-text-stroke:0.3px #434343;right:740.65px;">8/29/2025</div>
<div style="position:absolute;top:518.25px;height:24px;line-height:24px;font-size:16.2px;color:#434343;white-space:nowrap;letter-spacing:0.032px;-webkit-text-stroke:0.3px #434343;left:275px;">Not Started</div>
<div style="position:absolute;top:518.25px;height:24px;line-height:24px;font-size:16.2px;color:#434343;white-space:nowrap;letter-spacing:0.087px;-webkit-text-stroke:0.3px #434343;right:310.11px;">85</div>
<div style="position:absolute;top:518.25px;height:24px;line-height:24px;font-size:16.2px;color:#434343;white-space:nowrap;letter-spacing:0.087px;-webkit-text-stroke:0.3px #434343;right:162.41px;">0</div>
<div style="position:absolute;top:518.25px;height:24px;line-height:24px;font-size:16.2px;color:#434343;white-space:nowrap;letter-spacing:-0.581px;-webkit-text-stroke:0.3px #434343;left:853px;">730-TRN-SW</div>
<div style="position:absolute;left:990px;top:511.00px;width:6px;height:36.50px;overflow:hidden"><div style="position:absolute;left:2.5px;top:7.25px;height:24px;line-height:24px;font-size:16.2px;color:#434343">C</div></div>
<div style="position:absolute;left:48px;top:546.20px;width:948px;height:37.80px;background:#f6f8f9"></div>
<div style="position:absolute;left:0;top:547.50px;width:47px;height:36.50px;background:#fff;border-bottom:1px solid #c2c2c2;box-shadow:inset 0 -1px 0 #e6e6e6"></div>
<div style="position:absolute;left:0.6px;top:555.95px;width:38px;height:20px;line-height:20px;text-align:center;font-size:13.5px;color:#444746;-webkit-text-stroke:0.25px #444746">17</div>
<div style="position:absolute;left:48px;top:547.50px;width:66px;height:36.50px;overflow:hidden">
<div style="position:absolute;right:9.85px;top:7.25px;height:24px;line-height:24px;font-size:16.2px;color:#434343;white-space:nowrap;letter-spacing:0.551px;-webkit-text-stroke:0.3px #434343">7/28/2025</div></div>
<div style="position:absolute;top:554.75px;height:24px;line-height:24px;font-size:16.2px;color:#434343;white-space:nowrap;letter-spacing:0.609px;-webkit-text-stroke:0.3px #434343;right:740.59px;">9/5/2025</div>
<div style="position:absolute;top:554.75px;height:24px;line-height:24px;font-size:16.2px;color:#434343;white-space:nowrap;letter-spacing:0.032px;-webkit-text-stroke:0.3px #434343;left:275px;">Not Started</div>
<div style="position:absolute;top:554.75px;height:24px;line-height:24px;font-size:16.2px;color:#434343;white-space:nowrap;letter-spacing:-0.391px;-webkit-text-stroke:0.3px #434343;left:380px;">TSK-101</div>
<div style="position:absolute;top:554.75px;height:24px;line-height:24px;font-size:16.2px;color:#434343;white-space:nowrap;letter-spacing:0.087px;-webkit-text-stroke:0.3px #434343;right:310.11px;">60</div>
<div style="position:absolute;top:554.75px;height:24px;line-height:24px;font-size:16.2px;color:#434343;white-space:nowrap;letter-spacing:0.087px;-webkit-text-stroke:0.3px #434343;right:162.41px;">0</div>
<div style="position:absolute;top:554.75px;height:24px;line-height:24px;font-size:16.2px;color:#434343;white-space:nowrap;letter-spacing:-0.668px;-webkit-text-stroke:0.3px #434343;left:853px;">105-SUPPORT</div>
<div style="position:absolute;left:990px;top:547.50px;width:6px;height:36.50px;overflow:hidden"><div style="position:absolute;left:2.5px;top:7.25px;height:24px;line-height:24px;font-size:16.2px;color:#434343">C</div></div>
<div style="position:absolute;left:48px;top:584.00px;width:948px;height:36.50px;background:#ffffff"></div>
<div style="position:absolute;left:0;top:584.00px;width:47px;height:36.50px;background:#fff;border-bottom:1px solid #c2c2c2;box-shadow:inset 0 -1px 0 #e6e6e6"></div>
<div style="position:absolute;left:0.6px;top:592.45px;width:38px;height:20px;line-height:20px;text-align:center;font-size:13.5px;color:#444746;-webkit-text-stroke:0.25px #444746">18</div>
<div style="position:absolute;left:48px;top:584.00px;width:66px;height:36.50px;overflow:hidden">
<div style="position:absolute;right:9.85px;top:7.25px;height:24px;line-height:24px;font-size:16.2px;color:#434343;white-space:nowrap;letter-spacing:0.551px;-webkit-text-stroke:0.3px #434343">7/28/2025</div></div>
<div style="position:absolute;top:591.25px;height:24px;line-height:24px;font-size:16.2px;color:#434343;white-space:nowrap;letter-spacing:0.551px;-webkit-text-stroke:0.3px #434343;right:740.65px;">8/22/2025</div>
<div style="position:absolute;top:591.25px;height:24px;line-height:24px;font-size:16.2px;color:#434343;white-space:nowrap;letter-spacing:0.004px;-webkit-text-stroke:0.3px #434343;left:275px;">Blocked</div>
<div style="position:absolute;top:591.25px;height:24px;line-height:24px;font-size:16.2px;color:#434343;white-space:nowrap;letter-spacing:-0.220px;-webkit-text-stroke:0.3px #434343;left:380px;">TSK-115</div>
<div style="position:absolute;top:591.25px;height:24px;line-height:24px;font-size:16.2px;color:#434343;white-space:nowrap;letter-spacing:0.087px;-webkit-text-stroke:0.3px #434343;right:310.11px;">90</div>
<div style="position:absolute;top:591.25px;height:24px;line-height:24px;font-size:16.2px;color:#434343;white-space:nowrap;letter-spacing:0.087px;-webkit-text-stroke:0.3px #434343;right:162.41px;">20</div>
<div style="position:absolute;top:591.25px;height:24px;line-height:24px;font-size:16.2px;color:#434343;white-space:nowrap;letter-spacing:-0.612px;-webkit-text-stroke:0.3px #434343;left:853px;">610-AG-SW</div>
<div style="position:absolute;left:990px;top:584.00px;width:6px;height:36.50px;overflow:hidden"><div style="position:absolute;left:2.5px;top:7.25px;height:24px;line-height:24px;font-size:16.2px;color:#434343">C</div></div>
<div style="position:absolute;left:48px;top:619.20px;width:948px;height:37.80px;background:#f6f8f9"></div>
<div style="position:absolute;left:0;top:620.50px;width:47px;height:36.50px;background:#fff;border-bottom:1px solid #c2c2c2;box-shadow:inset 0 -1px 0 #e6e6e6"></div>
<div style="position:absolute;left:0.6px;top:628.95px;width:38px;height:20px;line-height:20px;text-align:center;font-size:13.5px;color:#444746;-webkit-text-stroke:0.25px #444746">19</div>
<div style="position:absolute;left:48px;top:620.50px;width:66px;height:36.50px;overflow:hidden">
<div style="position:absolute;right:9.85px;top:7.25px;height:24px;line-height:24px;font-size:16.2px;color:#434343;white-space:nowrap;letter-spacing:0.551px;-webkit-text-stroke:0.3px #434343">7/28/2025</div></div>
<div style="position:absolute;top:627.75px;height:24px;line-height:24px;font-size:16.2px;color:#434343;white-space:nowrap;letter-spacing:0.551px;-webkit-text-stroke:0.3px #434343;right:740.65px;">8/22/2025</div>
<div style="position:absolute;top:627.75px;height:24px;line-height:24px;font-size:16.2px;color:#434343;white-space:nowrap;letter-spacing:-0.062px;-webkit-text-stroke:0.3px #434343;left:275px;">In Progress</div>
<div style="position:absolute;top:627.75px;height:24px;line-height:24px;font-size:16.2px;color:#434343;white-space:nowrap;letter-spacing:0.087px;-webkit-text-stroke:0.3px #434343;right:310.11px;">45</div>
<div style="position:absolute;top:627.75px;height:24px;line-height:24px;font-size:16.2px;color:#434343;white-space:nowrap;letter-spacing:0.087px;-webkit-text-stroke:0.3px #434343;right:162.41px;">20</div>
<div style="position:absolute;top:627.75px;height:24px;line-height:24px;font-size:16.2px;color:#434343;white-space:nowrap;letter-spacing:-0.591px;-webkit-text-stroke:0.3px #434343;left:853px;">480-HW-R&amp;D</div>
<div style="position:absolute;left:990px;top:620.50px;width:6px;height:36.50px;overflow:hidden"><div style="position:absolute;left:2.5px;top:7.25px;height:24px;line-height:24px;font-size:16.2px;color:#434343">C</div></div>
<div style="position:absolute;left:48px;top:657.00px;width:948px;height:36.50px;background:#ffffff"></div>
<div style="position:absolute;left:0;top:657.00px;width:47px;height:36.50px;background:#fff;border-bottom:1px solid #c2c2c2;box-shadow:inset 0 -1px 0 #e6e6e6"></div>
<div style="position:absolute;left:0.6px;top:665.45px;width:38px;height:20px;line-height:20px;text-align:center;font-size:13.5px;color:#444746;-webkit-text-stroke:0.25px #444746">20</div>
<div style="position:absolute;left:48px;top:657.00px;width:66px;height:36.50px;overflow:hidden">
<div style="position:absolute;right:9.85px;top:7.25px;height:24px;line-height:24px;font-size:16.2px;color:#434343;white-space:nowrap;letter-spacing:0.551px;-webkit-text-stroke:0.3px #434343">7/28/2025</div></div>
<div style="position:absolute;top:664.25px;height:24px;line-height:24px;font-size:16.2px;color:#434343;white-space:nowrap;letter-spacing:0.551px;-webkit-text-stroke:0.3px #434343;right:740.65px;">8/15/2025</div>
<div style="position:absolute;top:664.25px;height:24px;line-height:24px;font-size:16.2px;color:#434343;white-space:nowrap;letter-spacing:-0.062px;-webkit-text-stroke:0.3px #434343;left:275px;">In Progress</div>
<div style="position:absolute;top:664.25px;height:24px;line-height:24px;font-size:16.2px;color:#434343;white-space:nowrap;letter-spacing:0.087px;-webkit-text-stroke:0.3px #434343;right:310.11px;">40</div>
<div style="position:absolute;top:664.25px;height:24px;line-height:24px;font-size:16.2px;color:#434343;white-space:nowrap;letter-spacing:0.087px;-webkit-text-stroke:0.3px #434343;right:162.41px;">15</div>
<div style="position:absolute;top:664.25px;height:24px;line-height:24px;font-size:16.2px;color:#434343;white-space:nowrap;letter-spacing:-0.568px;-webkit-text-stroke:0.3px #434343;left:853px;">480-SW-QA</div>
<div style="position:absolute;left:990px;top:657.00px;width:6px;height:36.50px;overflow:hidden"><div style="position:absolute;left:2.5px;top:7.25px;height:24px;line-height:24px;font-size:16.2px;color:#434343">C</div></div>
<div style="position:absolute;left:48px;top:692.20px;width:948px;height:37.80px;background:#f6f8f9"></div>
<div style="position:absolute;left:0;top:693.50px;width:47px;height:36.50px;background:#fff;border-bottom:1px solid #c2c2c2;box-shadow:inset 0 -1px 0 #e6e6e6"></div>
<div style="position:absolute;left:0.6px;top:701.95px;width:38px;height:20px;line-height:20px;text-align:center;font-size:13.5px;color:#444746;-webkit-text-stroke:0.25px #444746">21</div>
<div style="position:absolute;left:48px;top:693.50px;width:66px;height:36.50px;overflow:hidden">
<div style="position:absolute;right:9.85px;top:7.25px;height:24px;line-height:24px;font-size:16.2px;color:#434343;white-space:nowrap;letter-spacing:0.551px;-webkit-text-stroke:0.3px #434343">7/23/2025</div></div>
<div style="position:absolute;top:700.75px;height:24px;line-height:24px;font-size:16.2px;color:#434343;white-space:nowrap;letter-spacing:0.551px;-webkit-text-stroke:0.3px #434343;right:740.65px;">8/20/2025</div>
<div style="position:absolute;top:700.75px;height:24px;line-height:24px;font-size:16.2px;color:#434343;white-space:nowrap;letter-spacing:-0.062px;-webkit-text-stroke:0.3px #434343;left:275px;">In Progress</div>
<div style="position:absolute;top:700.75px;height:24px;line-height:24px;font-size:16.2px;color:#434343;white-space:nowrap;letter-spacing:0.087px;-webkit-text-stroke:0.3px #434343;right:310.11px;">50</div>
<div style="position:absolute;top:700.75px;height:24px;line-height:24px;font-size:16.2px;color:#434343;white-space:nowrap;letter-spacing:0.087px;-webkit-text-stroke:0.3px #434343;right:162.41px;">25</div>
<div style="position:absolute;top:700.75px;height:24px;line-height:24px;font-size:16.2px;color:#434343;white-space:nowrap;letter-spacing:-0.668px;-webkit-text-stroke:0.3px #434343;left:853px;">105-SUPPORT</div>
<div style="position:absolute;left:990px;top:693.50px;width:6px;height:36.50px;overflow:hidden"><div style="position:absolute;left:2.5px;top:7.25px;height:24px;line-height:24px;font-size:16.2px;color:#434343">C</div></div>
<div style="position:absolute;left:48px;top:730.00px;width:948px;height:36.50px;background:#ffffff"></div>
<div style="position:absolute;left:0;top:730.00px;width:47px;height:36.50px;background:#fff;border-bottom:1px solid #c2c2c2;box-shadow:inset 0 -1px 0 #e6e6e6"></div>
<div style="position:absolute;left:0.6px;top:738.45px;width:38px;height:20px;line-height:20px;text-align:center;font-size:13.5px;color:#444746;-webkit-text-stroke:0.25px #444746">22</div>
<div style="position:absolute;left:48px;top:730.00px;width:66px;height:36.50px;overflow:hidden">
<div style="position:absolute;right:9.85px;top:7.25px;height:24px;line-height:24px;font-size:16.2px;color:#434343;white-space:nowrap;letter-spacing:0.551px;-webkit-text-stroke:0.3px #434343">7/21/2025</div></div>
<div style="position:absolute;top:737.25px;height:24px;line-height:24px;font-size:16.2px;color:#434343;white-space:nowrap;letter-spacing:0.609px;-webkit-text-stroke:0.3px #434343;right:740.59px;">9/2/2025</div>
<div style="position:absolute;top:737.25px;height:24px;line-height:24px;font-size:16.2px;color:#434343;white-space:nowrap;letter-spacing:0.032px;-webkit-text-stroke:0.3px #434343;left:275px;">Not Started</div>
<div style="position:absolute;top:737.25px;height:24px;line-height:24px;font-size:16.2px;color:#434343;white-space:nowrap;letter-spacing:-0.391px;-webkit-text-stroke:0.3px #434343;left:380px;">TSK-104</div>
<div style="position:absolute;top:737.25px;height:24px;line-height:24px;font-size:16.2px;color:#434343;white-space:nowrap;letter-spacing:0.087px;-webkit-text-stroke:0.3px #434343;right:310.11px;">50</div>
<div style="position:absolute;top:737.25px;height:24px;line-height:24px;font-size:16.2px;color:#434343;white-space:nowrap;letter-spacing:0.087px;-webkit-text-stroke:0.3px #434343;right:162.41px;">0</div>
<div style="position:absolute;top:737.25px;height:24px;line-height:24px;font-size:16.2px;color:#434343;white-space:nowrap;letter-spacing:-0.566px;-webkit-text-stroke:0.3px #434343;left:853px;">610-AG-QA</div>
<div style="position:absolute;left:990px;top:730.00px;width:6px;height:36.50px;overflow:hidden"><div style="position:absolute;left:2.5px;top:7.25px;height:24px;line-height:24px;font-size:16.2px;color:#434343">C</div></div>
</div>
<div style="position:absolute;left:996px;top:77px;width:14.5px;height:852.5px;background:#fdfdfe;border-left:1px solid #ececec;border-right:1px solid #f1f3f5;"></div>
<div style="position:absolute;left:996px;top:77px;width:14.5px;height:102px;background:#f5f5f5;border-top:1px solid #dcdcdc;border-left:1px solid #ececec;"></div>
<div style="position:absolute;left:996.5px;top:179px;width:14px;height:4.7px;background:#dfe3e8;"></div>
<div style="position:absolute;left:997.8px;top:185px;width:11.2px;height:31.8px;background:#d8dadd;border-radius:5.6px;"></div>
<div style="position:absolute;left:996.5px;top:890px;width:14px;height:19px;background:#f8f8f8;border-top:1px solid #ececec;"></div>
<div style="position:absolute;left:996.5px;top:909px;width:14px;height:20px;background:#f8f8f8;"></div>
<div style="position:absolute;left:997px;top:908.5px;width:8.5px;height:1px;background:#a8c7fa;"></div>
<svg style="position:absolute;left:1000px;top:896.3px;" width="6.4" height="4.2" viewBox="0 0 6.4 4.2"><path d="M0 4.2 L3.2 0 L6.4 4.2 Z" fill="#a3a3a3"/></svg>
<svg style="position:absolute;left:1000px;top:917.3px;" width="6.4" height="4.2" viewBox="0 0 6.4 4.2"><path d="M0 0 L3.2 4.2 L6.4 0 Z" fill="#a3a3a3"/></svg>
<div style="position:absolute;left:0px;top:929px;width:996.5px;height:15px;background:#ffffff;border-top:1px solid #d9d9d9;"></div>
<div style="position:absolute;left:0px;top:930px;width:47px;height:14px;background:#f3f3f3;"></div>
<div style="position:absolute;left:47px;top:930px;width:1.5px;height:13.5px;background:#c0c0c0;"></div>
<div style="position:absolute;left:377px;top:931px;width:225px;height:11.5px;background:#dadce0;border-radius:6px;"></div>
<div style="position:absolute;left:958px;top:930px;width:38.5px;height:13.5px;background:#f7f7f7;border-left:1px solid #ececec;"></div>
<div style="position:absolute;left:977px;top:930px;width:1px;height:13.5px;background:#efefef;"></div>
<div style="position:absolute;left:996.5px;top:929px;width:14px;height:15px;background:#f5f5f5;border-top:1px solid #e6e6e6;"></div>
<svg style="position:absolute;left:964.6px;top:933.5px;" width="4" height="6.4" viewBox="0 0 4 6.4"><path d="M4 0 L0 3.2 L4 6.4 Z" fill="#a3a3a3"/></svg>
<svg style="position:absolute;left:985.4px;top:933.5px;" width="4" height="6.4" viewBox="0 0 4 6.4"><path d="M0 0 L4 3.2 L0 6.4 Z" fill="#a3a3a3"/></svg>
<div style="position:absolute;left:0px;top:944px;width:1424px;height:1px;background:#e6e8ea;"></div>
<div style="position:absolute;left:152px;top:944px;width:1272px;height:1.4px;background:#e1e5ea;"></div>
<div style="position:absolute;left:1030px;top:-20px;width:387.5px;height:944.5px;background:#ffffff;border:1px solid #e9ecf0;border-radius:0 0 20px 20px;"></div>
<svg style="position:absolute;left:1052px;top:7.0px;" width="25.2" height="25.2" viewBox="0 0 24.4 24.4"><path d="M12.2 0 C13.2 5 19.4 11.2 24.4 12.2 C19.4 13.2 13.2 19.4 12.2 24.4 C11.2 19.4 5 13.2 0 12.2 C5 11.2 11.2 5 12.2 0 Z" fill="#1f1f1f"/></svg>
<div style="position:absolute;top:3.40px;height:31px;line-height:31px;font-size:20.5px;color:#1f1f1f;white-space:nowrap;letter-spacing:-0.156px;-webkit-text-stroke:0.5px #1f1f1f;left:1089.00px;">Gemini</div>
<div style="position:absolute;left:1283px;top:9.5px;width:5px;height:5px;background:#444746;border-radius:50%;"></div>
<div style="position:absolute;left:1283px;top:16.7px;width:5px;height:5px;background:#444746;border-radius:50%;"></div>
<div style="position:absolute;left:1283px;top:24.0px;width:5px;height:5px;background:#444746;border-radius:50%;"></div>
<svg style="position:absolute;left:1326px;top:10px;" width="18" height="18" viewBox="0 0 18 18"><path d="M10.4 1.1 H16 V6.8 M1.1 10.6 V16.4 H6.8" fill="none" stroke="#444746" stroke-width="2.3"/></svg>
<svg style="position:absolute;left:1374.5px;top:11px;" width="17" height="16" viewBox="0 0 17 16"><path d="M1 0.6 L16 15.4 M16 0.6 L1 15.4" fill="none" stroke="#444746" stroke-width="2.3"/></svg>
<div style="position:absolute;left:1050px;top:63px;width:348px;height:201px;background:#f0f4f9;border-radius:20px;"></div>
<svg style="position:absolute;left:1071px;top:84px;" width="22" height="22" viewBox="0 0 22 22"><path d="M10.9 2.85 H3.95 Q1.95 2.85 1.95 4.85 V17.05 Q1.95 19.05 3.95 19.05 H16.15 Q18.15 19.05 18.15 17.05 V10.1" fill="none" stroke="#1f1f1f" stroke-width="1.9"/><path d="M15.5 0.4 C15.9 2.9 18 5 20.5 5.4 C18 5.8 15.9 7.9 15.5 10.4 C15.1 7.9 13 5.8 10.5 5.4 C13 5 15.1 2.9 15.5 0.4Z" fill="#1f1f1f"/><g fill="#1f1f1f"><rect x="5" y="5.75" width="2.1" height="2.1"/><rect x="5" y="9.95" width="2.1" height="2.1"/><rect x="9" y="10" width="4.2" height="2"/><rect x="5" y="13.95" width="2.1" height="2.1"/><rect x="9" y="14" width="6.1" height="2"/></g></svg>
<div style="position:absolute;top:81.70px;height:26px;line-height:26px;font-size:17.5px;color:#1f1f1f;white-space:nowrap;letter-spacing:0.318px;-webkit-text-stroke:0.35px #1f1f1f;left:1103.80px;">Summary of this content</div>
<div style="position:absolute;top:121.00px;height:26px;line-height:26px;font-size:17px;color:#444746;white-space:nowrap;letter-spacing:0.160px;-webkit-text-stroke:0.25px #444746;left:1069.40px;">This spreadsheet, named "Project &amp;</div>
<div style="position:absolute;top:145.30px;height:26px;line-height:26px;font-size:17px;color:#444746;white-space:nowrap;letter-spacing:0.197px;-webkit-text-stroke:0.25px #444746;left:1069.40px;">Budget Tracker", is used to track</div>
<div style="position:absolute;top:169.60px;height:26px;line-height:26px;font-size:17px;color:#444746;white-space:nowrap;letter-spacing:0.193px;-webkit-text-stroke:0.25px #444746;left:1069.40px;">projects and tasks. It includes details</div>
<div style="position:absolute;top:193.90px;height:26px;line-height:26px;font-size:17px;color:#444746;white-space:nowrap;letter-spacing:0.064px;-webkit-text-stroke:0.25px #444746;left:1069.40px;">such as a unique task ID, project code...</div>
<div style="position:absolute;left:1051px;top:146px;width:346px;height:74px;background:linear-gradient(180deg,rgba(240,244,249,0) 0%,rgba(240,244,249,0.06) 22%,rgba(240,244,249,0.33) 48%,rgba(240,244,249,0.62) 66%,rgba(240,244,249,0.8) 80%,rgba(240,244,249,0.84) 100%);"></div>
<div style="position:absolute;left:1215.35px;top:233.75px;width:3.9px;height:3.9px;background:#1557c0;border-radius:50%;"></div>
<div style="position:absolute;left:1221.6499999999999px;top:233.75px;width:3.9px;height:3.9px;background:#1557c0;border-radius:50%;"></div>
<div style="position:absolute;left:1227.9499999999998px;top:233.75px;width:3.9px;height:3.9px;background:#1557c0;border-radius:50%;"></div>
<div style="position:absolute;top:285.50px;height:21px;line-height:21px;font-size:14px;color:#1f1f1f;white-space:nowrap;letter-spacing:-0.070px;-webkit-text-stroke:0.4px #1f1f1f;left:1055.00px;">See what Gemini can do</div>
<svg style="position:absolute;left:1376.5px;top:290.0px;" width="8" height="13" viewBox="0 0 8 13"><path d="M1.2 1 L6.6 6.5 L1.2 12" fill="none" stroke="#1f1f1f" stroke-width="1.9"/></svg>
<div style="position:absolute;left:1050px;top:328px;width:348px;height:78.2px;background:#f0f4f9;border-radius:20px 20px 4px 4px;"></div>
<div style="position:absolute;left:1050px;top:408px;width:348px;height:77.5px;background:#f0f4f9;border-radius:4px 4px 20px 20px;"></div>
<div style="position:absolute;left:1069px;top:345px;width:44px;height:44px;background:#ffffff;border-radius:10px;"></div>
<div style="position:absolute;left:1069px;top:425px;width:44px;height:44px;background:#ffffff;border-radius:10px;"></div>
<svg style="position:absolute;left:1080px;top:356px;" width="22" height="22" viewBox="0 0 22 22"><path d="M9.7 4.1 H3.6 Q2 4.1 2 5.7 V17 Q2 18.6 3.6 18.6 H18.5 Q20.1 18.6 20.1 17 V9.7" fill="none" stroke="#3c4043" stroke-width="2"/><path d="M4.7 14.1 L8.5 10.4 L12 13.2 L16.3 9.6" fill="none" stroke="#3c4043" stroke-width="1.8" stroke-linejoin="round"/><path d="M16.50 0.30 C16.92 2.70 18.90 4.68 21.30 5.10 C18.90 5.52 16.92 7.50 16.50 9.90 C16.08 7.50 14.10 5.52 11.70 5.10 C14.10 4.68 16.08 2.70 16.50 0.30 Z" fill="#3c4043"/></svg>
<svg style="position:absolute;left:1080px;top:436px;" width="22" height="22" viewBox="0 0 22 22"><path d="M10.4 1.83 A9 9 0 1 0 20.1 12.05" fill="none" stroke="#3c4043" stroke-width="2"/><rect x="10.2" y="10.3" width="2" height="5.5" fill="#3c4043"/><circle cx="11.2" cy="8.3" r="1.25" fill="#3c4043"/><path d="M17.70 -0.10 C18.12 2.30 20.10 4.28 22.50 4.70 C20.10 5.12 18.12 7.10 17.70 9.50 C17.28 7.10 15.30 5.12 12.90 4.70 C15.30 4.28 17.28 2.30 17.70 -0.10 Z" fill="#3c4043"/></svg>
<div style="position:absolute;top:345.00px;height:22px;line-height:22px;font-size:15px;color:#1f1f1f;white-space:nowrap;letter-spacing:0.340px;-webkit-text-stroke:0.3px #1f1f1f;left:1132.50px;">Generate a chart</div>
<div style="position:absolute;top:365.00px;height:22px;line-height:22px;font-size:15px;color:#70757a;white-space:nowrap;letter-spacing:0.352px;-webkit-text-stroke:0.3px #70757a;left:1132.50px;">Create a chart using this data</div>
<div style="position:absolute;top:426.00px;height:22px;line-height:22px;font-size:15px;color:#1f1f1f;white-space:nowrap;letter-spacing:0.317px;-webkit-text-stroke:0.3px #1f1f1f;left:1132.50px;">Analyze for insights</div>
<div style="position:absolute;top:445.30px;height:22px;line-height:22px;font-size:15px;color:#70757a;white-space:nowrap;letter-spacing:0.317px;-webkit-text-stroke:0.3px #70757a;left:1132.50px;">Generate insights or trends for th...</div>
<div style="position:absolute;top:507.00px;height:21px;line-height:21px;font-size:14px;color:#1f1f1f;white-space:nowrap;letter-spacing:-0.485px;-webkit-text-stroke:0.4px #1f1f1f;left:1055.00px;">Gems</div>
<svg style="position:absolute;left:1376.5px;top:511.5px;" width="8" height="13" viewBox="0 0 8 13"><path d="M1.2 1 L6.6 6.5 L1.2 12" fill="none" stroke="#1f1f1f" stroke-width="1.9"/></svg>
<div style="position:absolute;left:1050px;top:540px;width:348px;height:213px;overflow:hidden">
<div style="position:absolute;left:0;top:9.3px;width:348px;height:92.4px;background:#f0f4f9;border-radius:20px 20px 4px 4px"></div>
<div style="position:absolute;left:0;top:103.7px;width:348px;height:92.8px;background:#f0f4f9;border-radius:4px"></div>
<div style="position:absolute;left:0;top:184.3px;width:348px;height:1px;background:rgba(255,255,255,0.8)"></div>
<div style="position:absolute;left:0;top:199.4px;width:348px;height:40px;background:#f0f4f9;border-radius:4px"></div>
</div>
<div style="position:absolute;left:1069.1px;top:573.6px;width:43.6px;height:43.6px;background:#fabdd1;border-radius:50%;"></div>
<div style="position:absolute;left:1069.1px;top:668.2px;width:43.6px;height:43.6px;background:#fbcc80;border-radius:50%;"></div>
<svg style="position:absolute;left:1080.5px;top:584.5px;" width="22" height="22" viewBox="0 0 22 22"><rect x="6.4" y="1.5" width="13.1" height="13.3" rx="1.5" fill="none" stroke="#7e2b4f" stroke-width="1.8"/><path d="M1.5 4.4 V17.2 Q1.5 19 3.3 19 H16.1" fill="none" stroke="#7e2b4f" stroke-width="1.8"/><circle cx="12.95" cy="5.9" r="1.7" fill="none" stroke="#7e2b4f" stroke-width="1.4"/><path d="M8.6 13.6 Q9.4 10.2 12.95 10.2 Q16.5 10.2 17.3 13.6" fill="none" stroke="#7e2b4f" stroke-width="1.6"/></svg>
<svg style="position:absolute;left:1080px;top:679px;" width="22" height="22" viewBox="0 0 22 22"><path d="M3.4 2 H18.6 Q20 2 20 3.4 V14.4 Q20 15.8 18.6 15.8 H6.4 L2 20.2 V3.4 Q2 2 3.4 2 Z" fill="none" stroke="#66450c" stroke-width="1.9" stroke-linejoin="round"/><circle cx="11" cy="7.6" r="1.7" fill="#66450c"/><path d="M7.3 13 Q7.7 10.4 11 10.4 Q14.3 10.4 14.7 13 Z" fill="#66450c"/></svg>
<div style="position:absolute;top:564.40px;height:22px;line-height:22px;font-size:15px;color:#1f1f1f;white-space:nowrap;letter-spacing:0.278px;-webkit-text-stroke:0.3px #1f1f1f;left:1132.60px;">Sentiment analyzer</div>
<div style="position:absolute;top:584.00px;height:22px;line-height:22px;font-size:15px;color:#70757a;white-space:nowrap;letter-spacing:0.373px;-webkit-text-stroke:0.3px #70757a;left:1132.60px;">Analyze customer feedback to</div>
<div style="position:absolute;top:603.60px;height:22px;line-height:22px;font-size:15px;color:#70757a;white-space:nowrap;letter-spacing:0.166px;-webkit-text-stroke:0.3px #70757a;left:1132.60px;">reveal trends and make...</div>
<div style="position:absolute;top:659.40px;height:22px;line-height:22px;font-size:15px;color:#1f1f1f;white-space:nowrap;letter-spacing:0.423px;-webkit-text-stroke:0.3px #1f1f1f;left:1132.60px;">Outreach specialist</div>
<div style="position:absolute;top:678.80px;height:22px;line-height:22px;font-size:15px;color:#70757a;white-space:nowrap;letter-spacing:0.325px;-webkit-text-stroke:0.3px #70757a;left:1132.60px;">Craft personalized messages to</div>
<div style="position:absolute;top:698.40px;height:22px;line-height:22px;font-size:15px;color:#70757a;white-space:nowrap;letter-spacing:0.317px;-webkit-text-stroke:0.3px #70757a;left:1132.60px;">potential customers, build...</div>
<div style="position:absolute;left:1403px;top:58px;width:9px;height:609.5px;background:#dadce0;border-radius:4.5px;"></div>
<div style="position:absolute;left:1030px;top:752.8px;width:387.5px;height:171.7px;background:#ffffff;border:1px solid #e9ecf0;border-radius:20px;"></div>
<div style="position:absolute;left:1048.4px;top:773px;width:350.3px;height:74px;background:#ffffff;border:1px solid #8b8e92;border-radius:37px;"></div>
<div style="position:absolute;top:795.00px;height:29px;line-height:29px;font-size:19.5px;color:#777777;white-space:nowrap;letter-spacing:0.135px;-webkit-text-stroke:0.3px #777777;left:1074.00px;">Enter a prompt here</div>
<div style="position:absolute;top:864.50px;height:21px;line-height:21px;font-size:14px;color:#70757a;white-space:nowrap;letter-spacing:0.053px;-webkit-text-stroke:0.3px #70757a;left:1092.30px;">Gemini in Workspace can make mistakes,</div>
<div style="position:absolute;top:884.50px;height:21px;line-height:21px;font-size:14px;color:#70757a;white-space:nowrap;letter-spacing:0.218px;-webkit-text-stroke:0.3px #70757a;left:1095.20px;">so double-check responses.</div>
<div style="position:absolute;top:884.50px;height:21px;line-height:21px;font-size:14px;color:#444746;white-space:nowrap;letter-spacing:0.080px;-webkit-text-stroke:0.45px #444746;left:1279.60px;">Learn more</div>
<div style="position:absolute;left:1279.6px;top:903px;width:72.6px;height:1.2px;background:#444746;"></div>
<svg style="position:absolute;left:1227.2px;top:817.6px;filter:drop-shadow(0 1px 1px rgba(0,0,0,0.35));" width="15" height="23.5" viewBox="0 0 15 23.5"><path d="M1.5 1.9 V16.4 L4.9 13.3 L8.2 21 L10.9 19.8 L7.7 12.3 L12.6 12.3 Z" fill="#000" stroke="#fff" stroke-width="1.3" stroke-linejoin="round" paint-order="stroke"/></svg>
</div>
</body></html>
